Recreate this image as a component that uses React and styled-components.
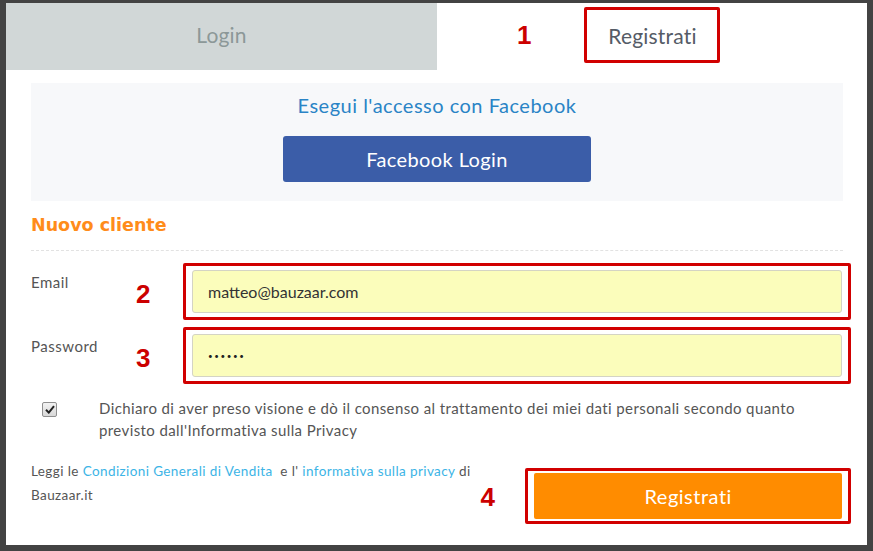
import React from 'react';
import styled, { createGlobalStyle } from 'styled-components';

const GlobalStyle = createGlobalStyle`
  html, body {
    margin: 0;
    padding: 0;
    background: #434343;
    font-family: 'Lato', 'Open Sans', sans-serif;
  }
`;

const Backdrop = styled.div`
  width: 873px;
  height: 551px;
  box-sizing: border-box;
  padding: 3px 6px 6px 6px;
  background: #434343;
`;

const Modal = styled.div`
  width: 861px;
  height: 542px;
  background: #fff;
  display: flex;
  flex-direction: column;
`;

const Tabs = styled.div`
  display: grid;
  grid-template-columns: 431px 1fr;
  height: 67px;
`;

const Tab = styled.div`
  display: flex;
  align-items: center;
  justify-content: ${(p) => (p.active ? 'flex-start' : 'center')};
  gap: 53px;
  background: ${(p) => (p.active ? '#fff' : '#d1d7d7')};
  color: ${(p) => (p.active ? '#555b66' : '#8c9898')};
  font-size: 21px;
  letter-spacing: 0.2px;
  padding-left: ${(p) => (p.active ? '80px' : '0')};
  padding-bottom: ${(p) => (p.active ? '3px' : '4px')};
`;

const Mark = styled.span`
  font-family: 'Liberation Sans', Arial, sans-serif;
  font-weight: bold;
  font-size: 26px;
  letter-spacing: 0;
  color: #cc0000;
`;

const RedBox = styled.div`
  border: 3px solid #d10000;
  border-radius: 2px;
  padding: ${(p) => p.pad || '4px 6px'};
  box-sizing: border-box;
  width: ${(p) => p.w || 'auto'};
  margin-top: ${(p) => p.mt || '0'};
`;

const TabLabel = styled(RedBox)`
  width: 136px;
  height: 56px;
  display: flex;
  align-items: center;
  justify-content: center;
`;

const Body = styled.div`
  padding: 13px 24px 0 25px;
  display: flex;
  flex-direction: column;
`;

const FbPanel = styled.div`
  background: #f7f8fa;
  height: 118px;
  display: flex;
  flex-direction: column;
  align-items: center;
  padding-top: 10px;
  box-sizing: border-box;
`;

const FbTitle = styled.div`
  color: #2a84c6;
  font-size: 20px;
  letter-spacing: 0.5px;
  line-height: 24px;
`;

const FbButton = styled.button`
  margin-top: 19px;
  width: 308px;
  height: 46px;
  border: none;
  border-radius: 3px;
  background: #3b5da8;
  color: #fff;
  font-family: inherit;
  font-size: 20px;
  letter-spacing: 0.4px;
`;

const SectionTitle = styled.div`
  margin-top: 13px;
  color: #ff8c1a;
  font-family: 'DejaVu Sans', sans-serif;
  font-weight: bold;
  font-size: 17.5px;
  line-height: 22px;
  padding-bottom: 14px;
  border-bottom: 1px dashed #e2e2e2;
`;

const Row = styled.div`
  display: flex;
  align-items: flex-start;
  margin-right: -8px;
  margin-top: ${(p) => p.mt || '0'};
`;

const Label = styled.div`
  width: 105px;
  padding-top: 10px;
  font-size: 15px;
  letter-spacing: 0.5px;
  color: #555;
`;

const RowMark = styled(Mark)`
  width: 47px;
  padding-top: 18px;
  line-height: 26px;
`;

const Input = styled.div`
  height: 43px;
  box-sizing: border-box;
  background: #fbfdbb;
  border: 1px solid #d4d4c4;
  border-radius: 3px;
  display: flex;
  align-items: center;
  padding-left: 15px;
  font-size: 16px;
  color: #333;
`;

const Dots = styled.span`
  font-size: 8px;
  letter-spacing: 1.6px;
  color: #222;
`;

const ConsentRow = styled.div`
  display: flex;
  margin-top: 13px;
  padding-left: 11px;
`;

const Check = styled.span`
  width: 13px;
  height: 13px;
  margin-top: 5px;
  margin-right: 42px;
  flex: none;
  border: 1px solid #8f8f8f;
  border-radius: 2px;
  background: linear-gradient(#f2f2f2, #d8d8d8);
  display: flex;
  align-items: center;
  justify-content: center;
`;

const ConsentText = styled.div`
  font-size: 15px;
  letter-spacing: 0.4px;
  line-height: 22px;
  color: #555;
`;

const Footer = styled.div`
  display: flex;
  align-items: flex-start;
  margin-right: -8px;
  margin-top: 18px;
`;

const Legal = styled.div`
  width: 450px;
  font-size: 13.5px;
  letter-spacing: 0.4px;
  line-height: 24px;
  color: #555;
`;

const Link = styled.span`
  color: #3cb4e6;
`;

const FootMark = styled(Mark)`
  width: 45px;
  padding-top: 25px;
  line-height: 26px;
`;

const SubmitButton = styled.button`
  width: 100%;
  height: 46px;
  border: none;
  border-radius: 2px;
  background: #ff8c00;
  color: #fff;
  font-family: inherit;
  font-size: 20px;
  letter-spacing: 0.5px;
`;

export default function App() {
  return (
    <>
      <GlobalStyle />
      <Backdrop>
        <Modal>
          <Tabs>
            <Tab>Login</Tab>
            <Tab active>
              <Mark>1</Mark>
              <TabLabel>Registrati</TabLabel>
            </Tab>
          </Tabs>
          <Body>
            <FbPanel>
              <FbTitle>Esegui l'accesso con Facebook</FbTitle>
              <FbButton>Facebook Login</FbButton>
            </FbPanel>
            <SectionTitle>Nuovo cliente</SectionTitle>
            <Row mt="12px">
              <Label>Email</Label>
              <RowMark>2</RowMark>
              <RedBox w="668px">
                <Input>matteo@bauzaar.com</Input>
              </RedBox>
            </Row>
            <Row mt="7px">
              <Label>Password</Label>
              <RowMark>3</RowMark>
              <RedBox w="668px">
                <Input>
                  <Dots>••••••</Dots>
                </Input>
              </RedBox>
            </Row>
            <ConsentRow>
              <Check>
                <svg width="10" height="9" viewBox="0 0 10 9">
                  <path d="M1 4.8 L3.8 7.6 L9 1.2" fill="none" stroke="#222" strokeWidth="2" />
                </svg>
              </Check>
              <ConsentText>
                Dichiaro di aver preso visione e dò il consenso al trattamento dei miei dati personali secondo quanto
                <br />
                previsto dall'Informativa sulla Privacy
              </ConsentText>
            </ConsentRow>
            <Footer>
              <Legal>
                Leggi le <Link>Condizioni Generali di Vendita</Link>&nbsp; e l' <Link>informativa sulla privacy</Link> di
                <br />
                Bauzaar.it
              </Legal>
              <FootMark>4</FootMark>
              <RedBox w="326px" pad="2px 6px" mt="9px">
                <SubmitButton>Registrati</SubmitButton>
              </RedBox>
            </Footer>
          </Body>
        </Modal>
      </Backdrop>
    </>
  );
}
